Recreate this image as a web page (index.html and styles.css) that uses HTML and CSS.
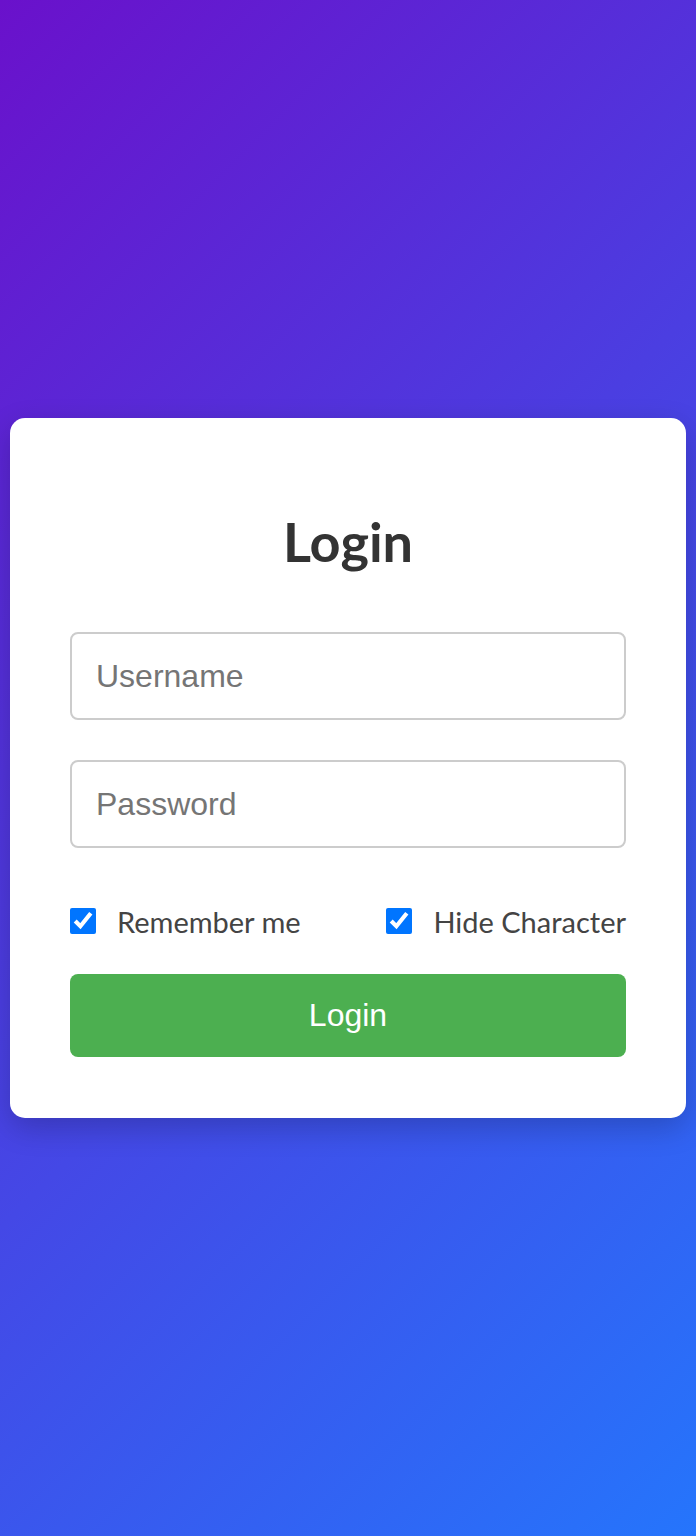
FILE: index.html
```html
<!DOCTYPE html>
<html lang="en">
<head>
<meta charset="utf-8">
<title>Login</title>
<link rel="stylesheet" href="styles.css">
</head>
<body>
<div class="card">
  <h2 class="title">Login</h2>
  <form class="form">
    <input class="field" type="text" placeholder="Username">
    <input class="field" type="password" placeholder="Password">
    <div class="options">
      <label class="check"><input type="checkbox" checked><span>Remember me</span></label>
      <label class="check"><input type="checkbox" checked><span>Hide Character</span></label>
    </div>
    <button class="btn" type="button">Login</button>
  </form>
</div>
</body>
</html>
```
FILE: styles.css
```css
html, body {
  height: 100%;
}
body {
  margin: 0;
  padding: 0 10px;
  box-sizing: border-box;
  background: linear-gradient(135deg, #6a11cb 0%, #2575fc 100%);
  display: flex;
  align-items: center;
  justify-content: center;
  font-family: Lato, "Open Sans", sans-serif;
}
.card {
  width: 100%;
  height: 700px;
  box-sizing: border-box;
  background: #fff;
  border-radius: 15px;
  padding: 60px;
  box-shadow: 0 10px 30px rgba(0, 0, 0, 0.2);
  display: flex;
  flex-direction: column;
}
.title {
  margin: 32px 0 0;
  text-align: center;
  font-size: 54px;
  font-weight: 700;
  color: #333;
  line-height: 64px;
}
.form {
  margin-top: 58px;
  display: flex;
  flex-direction: column;
}
.field {
  height: 88px;
  box-sizing: border-box;
  border: 2px solid #ccc;
  border-radius: 8px;
  padding: 0 24px;
  font-family: "Liberation Sans", Arial, sans-serif;
  font-size: 32px;
  color: #333;
  margin-bottom: 40px;
  outline: none;
}
.field::placeholder {
  color: #757575;
}
.options {
  display: flex;
  justify-content: space-between;
  align-items: center;
  height: 26px;
  margin-top: 20px;
}
.check {
  display: flex;
  align-items: center;
  gap: 21px;
  font-size: 29px;
  color: #444;
}
.check input {
  width: 26px;
  height: 26px;
  margin: 0;
  accent-color: #0075ff;
}
.btn {
  margin-top: 40px;
  height: 83px;
  border: none;
  border-radius: 8px;
  background: #4caf50;
  color: #fff;
  font-family: "Liberation Sans", Arial, sans-serif;
  font-size: 32px;
}
```
